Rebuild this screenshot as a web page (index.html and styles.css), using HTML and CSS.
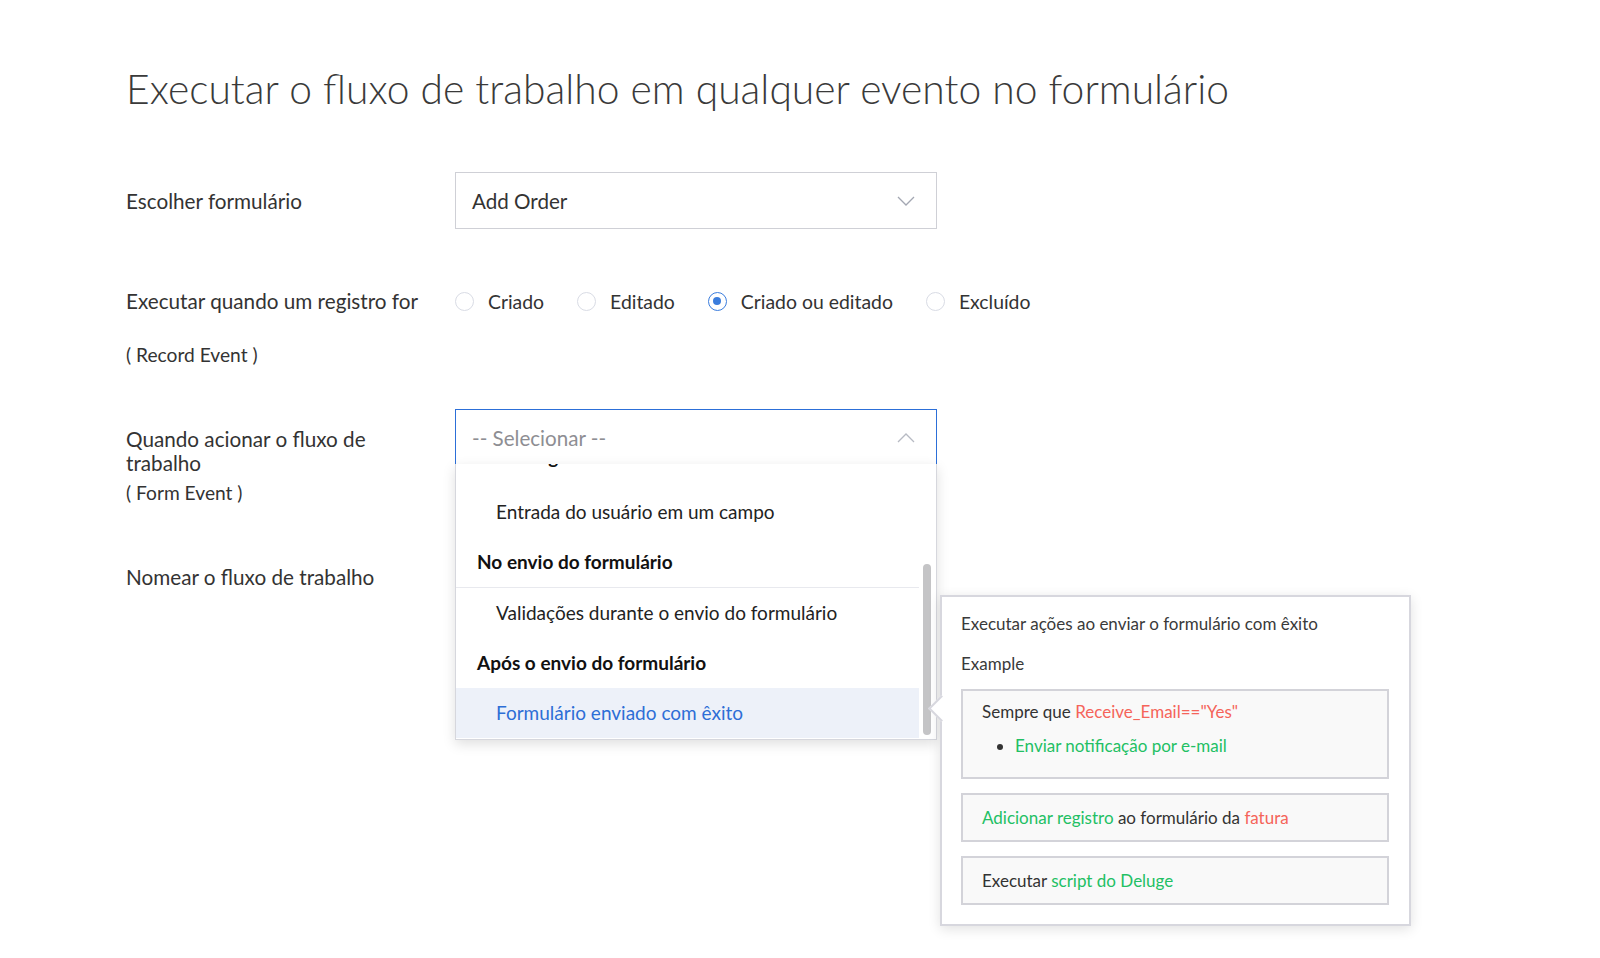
FILE: index.html
```html
<!DOCTYPE html>
<html lang="pt">
<head>
<meta charset="utf-8">
<title>Fluxo de trabalho</title>
<link rel="stylesheet" href="styles.css">
</head>
<body>
<div class="page">
  <h1 class="title">Executar o fluxo de trabalho em qualquer evento no formulário</h1>

  <div class="row row-form">
    <div class="label">Escolher formulário</div>
    <div class="select">
      <span class="select-value">Add Order</span>
      <svg class="chev" width="18" height="10" viewBox="0 0 18 10"><polyline points="1,1 9,9 17,1" fill="none" stroke="#a3a7b2" stroke-width="1.3"/></svg>
    </div>
  </div>

  <div class="row row-radio">
    <div class="label nowrap">Executar quando um registro for</div>
    <div class="radios">
      <label class="radio"><span class="dot"></span>Criado</label>
      <label class="radio"><span class="dot"></span>Editado</label>
      <label class="radio on"><span class="dot"></span>Criado ou editado</label>
      <label class="radio"><span class="dot"></span>Excluído</label>
    </div>
  </div>
  <div class="sub sub-record">( Record Event )</div>

  <div class="row row-trigger">
    <div class="label label-trigger">
      <div class="l-text">Quando acionar o fluxo de trabalho</div>
      <div class="l-sub">( Form Event )</div>
    </div>
    <div class="select-wrap">
      <div class="select open">
        <span class="select-value placeholder">-- Selecionar --</span>
        <svg class="chev" width="18" height="10" viewBox="0 0 18 10"><polyline points="1,9 9,1 17,9" fill="none" stroke="#b7bac3" stroke-width="1.3"/></svg>
      </div>
      <div class="dropdown">
        <ul class="list">
          <li class="item head cut"><span>Ao carregar o formulário</span></li>
          <li class="item">Entrada do usuário em um campo</li>
          <li class="item head sep">No envio do formulário</li>
          <li class="item">Validações durante o envio do formulário</li>
          <li class="item head">Após o envio do formulário</li>
          <li class="item active">Formulário enviado com êxito</li>
        </ul>
        <div class="track"><div class="thumb"></div></div>
      </div>
    </div>
  </div>

  <div class="row row-name">
    <div class="label">Nomear o fluxo de trabalho</div>
  </div>

  <div class="tip">
    <p class="tip-title">Executar ações ao enviar o formulário com êxito</p>
    <p class="tip-ex">Example</p>
    <div class="ex-box ex-first">
      <div>Sempre que <span class="red">Receive_Email=="Yes"</span></div>
      <ul class="ex-list"><li><span class="green">Enviar notificação por e-mail</span></li></ul>
    </div>
    <div class="ex-box"><span class="green">Adicionar registro</span> ao formulário da <span class="red">fatura</span></div>
    <div class="ex-box">Executar <span class="green">script do Deluge</span></div>
  </div>
</div>
</body>
</html>
```

FILE: styles.css
```css
* { box-sizing: border-box; }
html, body { margin: 0; padding: 0; background: #fff; }
body {
  font-family: Lato, "Open Sans", "Liberation Sans", sans-serif;
  color: #333;
  width: 1600px;
  height: 958px;
  overflow: hidden;
}
.page {
  position: relative;
  padding-left: 126px;
  height: 958px;
}
.title {
  margin: 0;
  padding-top: 62px;
  font-weight: 300;
  font-size: 40.8px;
  line-height: 53px;
  color: #3a3a3a;
}
.row { display: flex; }
.label {
  width: 329px;
  flex: none;
  font-size: 20.7px;
  line-height: 24px;
  color: #333;
}
.nowrap { white-space: nowrap; }
.row-form { margin-top: 57px; align-items: center; }
.select {
  width: 482px;
  height: 57px;
  border: 1px solid #cfd0d6;
  display: flex;
  align-items: center;
  justify-content: space-between;
  padding: 0 21px 0 16px;
  background: #fff;
}
.select-value { font-size: 20.6px; color: #333; }
.placeholder { color: #8e8e93; }
.row-radio { margin-top: 60px; align-items: center; height: 24px; }
.radios { display: flex; align-items: center; gap: 33px; }
.radio {
  display: flex;
  align-items: center;
  font-size: 19.4px;
  color: #333;
}
.dot {
  width: 19px;
  height: 19px;
  border-radius: 50%;
  border: 1px solid #d9dce5;
  margin-right: 14px;
  display: inline-block;
  position: relative;
}
.radio.on .dot { border: 1.5px solid #3b7ddd; }
.radio.on .dot::after {
  content: "";
  position: absolute;
  left: 4px; top: 4px;
  width: 8px; height: 8px;
  border-radius: 50%;
  background: #3b7ddd;
}
.sub { font-size: 19.2px; line-height: 24px; color: #333; }
.sub-record { margin-top: 30px; }
.row-trigger { margin-top: 42px; align-items: flex-start; height: 97px; }
.label-trigger { padding-top: 19px; }
.l-text { width: 262px; line-height: 23.5px; }
.l-sub { font-size: 19.2px; margin-top: 6px; }
.select-wrap { position: relative; }
.select.open {
  height: 55px;
  border: 1px solid #2c6fd8;
  border-bottom: none;
  padding-top: 2px;
}
.dropdown {
  position: absolute;
  left: 0;
  top: 55px;
  width: 482px;
  height: 276px;
  background: #fff;
  border: 1px solid #d6d7dd;
  border-top: none;
  box-shadow: 0 4px 12px rgba(0,0,0,0.13);
  display: flex;
  overflow: hidden;
  z-index: 2;
}
.list {
  list-style: none;
  margin: 0;
  padding: 0;
  width: 463px;
  flex: none;
}
.item {
  height: 50px;
  line-height: 50px;
  font-size: 19px;
  padding-left: 40px;
  color: #222;
  white-space: nowrap;
}
.item.head { font-weight: 700; padding-left: 21px; color: #111; }
.item.cut { height: 23px; line-height: 22px; display: flow-root; overflow: hidden; }
.item.cut span { display: block; margin-top: -18px; }
.item.sep { border-bottom: 1px solid #e8e9ee; height: 51px; }
.item.active { background: #edf1f9; color: #2d6ed6; }
.track { flex: 1; }
.thumb {
  margin-top: 100px;
  margin-left: 4px;
  width: 8px;
  height: 171px;
  border-radius: 4px;
  background: #c4c4c6;
}
.row-name { margin-top: 59px; }
.tip {
  position: absolute;
  left: 940px;
  top: 595px;
  width: 471px;
  height: 331px;
  background: #fff;
  border: 2px solid #d7d7de;
  box-shadow: 0 3px 12px rgba(0,0,0,0.12);
  padding: 15px 20px 0 19px;
  z-index: 3;
  font-size: 17px;
  color: #3a3a3a;
}
.tip::before {
  content: "";
  position: absolute;
  left: -10px;
  top: 102px;
  width: 17px;
  height: 17px;
  background: #fff;
  border-left: 2px solid #d7d7de;
  border-bottom: 2px solid #d7d7de;
  transform: rotate(45deg);
}
.tip-title { margin: 0; line-height: 24px; }
.tip-ex { margin: 16px 0 0; line-height: 24px; }
.ex-box {
  margin-top: 14px;
  width: 428px;
  height: 49px;
  border: 2px solid #d3d3d9;
  background: #f9f9f9;
  padding: 0 19px;
  line-height: 45px;
  font-size: 17px;
  color: #333;
}
.ex-first {
  margin-top: 13px;
  height: 90px;
  padding-top: 9px;
  line-height: 24px;
}
.ex-list { margin: 10px 0 0; padding-left: 33px; }
.ex-list li { line-height: 24px; }
.ex-list li::marker { color: #333; }
.red { color: #f5645a; }
.green { color: #22c064; }
```
